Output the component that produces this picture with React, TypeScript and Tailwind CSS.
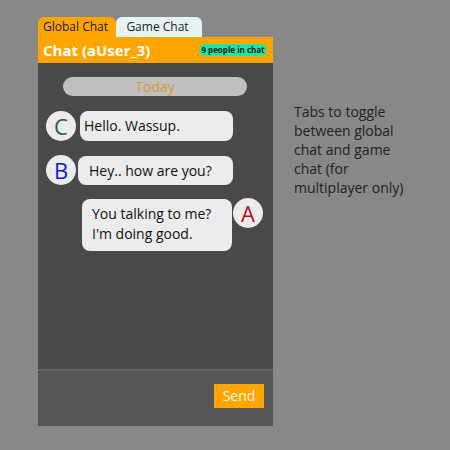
import React from 'react';

const font = { fontFamily: '"Open Sans", "Noto Sans", sans-serif' };

const Avatar = ({ letter, color }: { letter: string; color: string }) => (
  <div className={`w-[30px] h-[30px] rounded-full bg-[#ececec] flex items-center justify-center text-[22px] leading-none shrink-0 ${color}`}>
    {letter}
  </div>
);

export default function App() {
  return (
    <div className="w-[450px] h-[450px] bg-[#888888] flex pt-[17px] pl-[38px]" style={font}>
      {/* Chat panel */}
      <div className="w-[235px] flex flex-col">
        {/* Tabs */}
        <div className="flex h-[20px]">
          <div className="w-[78px] bg-[#ffa500] rounded-t-[6px] text-[12px] leading-[20px] text-[#1a1a1a] text-center pr-[3px]">
            Global Chat
          </div>
          <div className="w-[86px] bg-[#e6f3f3] rounded-t-[6px] text-[12px] leading-[20px] text-[#1a1a1a] text-center pr-[3px]">
            Game Chat
          </div>
        </div>

        {/* Header */}
        <div className="h-[26px] bg-[#ffa500] flex items-center justify-between pl-[5px] pr-[6px]">
          <span className="text-[15px] font-bold text-white">Chat (aUser_3)</span>
          <span className="h-[12px] w-[68px] rounded-full bg-[#22e39f] text-[8px] font-bold leading-[12px] text-[#10201a] text-center">
            9 people in chat
          </span>
        </div>

        {/* Messages */}
        <div className="h-[306px] bg-[#494949] flex flex-col">
          <div className="mt-[14px] ml-[25px] w-[184px] h-[19px] rounded-full bg-[#c0c0c0] text-[14px] leading-[19px] text-[#d69a3a] text-center">
            Today
          </div>

          <div className="mt-[15px] flex items-center pl-[8px]">
            <Avatar letter="C" color="text-[#2f5a4a]" />
            <div className="ml-[4px] w-[153px] h-[30px] rounded-[8px] bg-[#ececec] pl-[4px] text-[14px] leading-[30px] text-[#111]">
              Hello. Wassup.
            </div>
          </div>

          <div className="mt-[14px] flex items-center pl-[8px]">
            <Avatar letter="B" color="text-[#1515d0]" />
            <div className="ml-[2px] w-[155px] h-[29px] rounded-[8px] bg-[#ececec] pl-[11px] text-[14px] leading-[29px] text-[#111]">
              Hey.. how are you?
            </div>
          </div>

          <div className="mt-[14px] flex items-start pl-[44px]">
            <div className="w-[150px] h-[52px] rounded-[8px] bg-[#ececec] pl-[10px] pt-[5px] text-[14px] leading-[20px] text-[#111]">
              You talking to me?<br />I'm doing good.
            </div>
            <div className="ml-[1px] -mt-[1px]">
              <Avatar letter="A" color="text-[#b01018]" />
            </div>
          </div>
        </div>

        {/* Separator */}
        <div className="h-[2px] bg-[#626262]" />

        {/* Input area */}
        <div className="h-[55px] bg-[#555555] flex justify-end items-start pr-[9px] pt-[13px]">
          <button className="w-[50px] h-[24px] bg-[#ffa500] text-[14px] leading-[24px] text-[#fff6e6]">
            Send
          </button>
        </div>
      </div>

      {/* Side note */}
      <div className="ml-[21px] mt-[85px] text-[14px] leading-[19px] text-[#222]">
        Tabs to toggle<br />
        between global<br />
        chat and game<br />
        chat (for<br />
        multiplayer only)
      </div>
    </div>
  );
}
